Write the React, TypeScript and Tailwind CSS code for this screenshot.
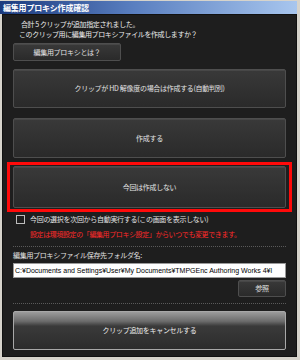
import React from 'react';

const jp = { fontFamily: '"Noto Sans CJK JP", "Noto Sans", sans-serif' };

const DarkButton: React.FC<{ className?: string; children: React.ReactNode }> = ({ className = '', children }) => (
  <button
    className={`flex items-center justify-center rounded-[2px] border border-[#4e4e4e] bg-[linear-gradient(to_bottom,#393939,#2a2a2a)] text-[7px] tracking-[-0.3px] text-[#e2e2e2] shadow-[inset_0_1px_0_#474747] ${className}`}
  >
    {children}
  </button>
);

export default function App() {
  return (
    <div className="flex h-[360px] w-[300px] flex-col bg-[#d6d3cb] pr-[3px] pb-[3px] pt-px" style={jp}>
      {/* title bar */}
      <div className="flex h-[13px] items-center bg-[linear-gradient(to_right,#1a3a7e,#5a7fc0_45%,#a8c6ee)] pl-[3px] text-[8px] font-bold tracking-[-0.2px] text-white">
        編集用プロキシ作成確認
      </div>

      <div className="ml-[2px] flex flex-1 flex-col border border-[#111] bg-[#1e1e1e] px-[10px]">
        <div className="pl-[6px] pt-[4px] text-[7px] leading-[10px] tracking-[-0.4px] text-[#ececec]">
          <p className="pl-[2px]">合計 5 クリップが追加指定されました。</p>
          <p>このクリップ用に編集用プロキシファイルを作成しますか？</p>
        </div>

        <DarkButton className="mt-[4px] h-[18px] w-[108px]">編集用プロキシとは？</DarkButton>
        <DarkButton className="mt-[8px] h-[39px] w-full">クリップが HD 解像度の場合は作成する(自動判別)</DarkButton>
        <DarkButton className="mt-[10px] h-[40px] w-full">作成する</DarkButton>

        <div className="-mx-[6px] mt-[4px] border-[3px] border-[#ff0a0a] px-[3px] py-[1px]">
          <DarkButton className="h-[42px] w-full">今回は作成しない</DarkButton>
        </div>

        <div className="mt-[2px] flex items-center gap-[5px] pl-[3px]">
          <span className="h-[9px] w-[9px] border border-[#bdbdbd]" />
          <span className="text-[7px] leading-[10px] tracking-[-0.3px] text-[#e2e2e2]">今回の選択を次回から自動実行する(この画面を表示しない)</span>
        </div>
        <p className="mt-[5px] pl-[17px] text-[7px] leading-[10px] tracking-[-0.4px] text-[#ff2a2a]">
          設定は環境設定の「編集用プロキシ設定」からいつでも変更できます。
        </p>

        <div className="mt-[7px] border-t border-dotted border-[#5a5a5a]" />

        <p className="mt-[3px] text-[7px] leading-[10px] tracking-[-0.3px] text-[#e2e2e2]">編集用プロキシファイル保存先フォルダ名:</p>
        <div className="mt-[3px] h-[15px] overflow-hidden whitespace-nowrap border border-[#9a9a9a] bg-white px-[1px] text-[7px] leading-[13px] text-black" style={{ fontFamily: '"Liberation Sans", Arial, sans-serif' }}>
          C:¥Documents and Settings¥User¥My Documents¥TMPGEnc Authoring Works 4¥l
        </div>

        <div className="mt-[2px] flex justify-end">
          <DarkButton className="h-[17px] w-[48px]">参照</DarkButton>
        </div>

        <div className="mt-[6px] border-t border-dotted border-[#5a5a5a]" />

        <button className="mt-[7px] flex h-[39px] w-full items-center justify-center rounded-[2px] border border-[#a8a8a8] bg-[linear-gradient(to_bottom,#9c9c9c_0%,#6c6c6c_25%,#3a3a3a_38%,#2c2c2c_100%)] text-[7px] tracking-[-0.3px] text-[#ececec]">
          クリップ追加をキャンセルする
        </button>
      </div>
    </div>
  );
}
